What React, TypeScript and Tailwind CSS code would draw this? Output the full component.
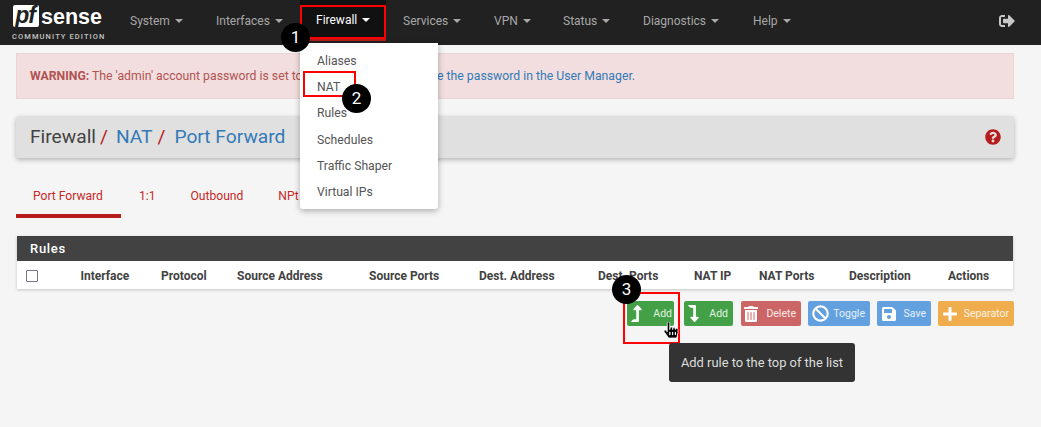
import React from "react";
import { FaLevelUpAlt, FaLevelDownAlt, FaTrashAlt, FaBan, FaSave, FaPlus, FaSignOutAlt, FaQuestionCircle, FaHandPointer } from "react-icons/fa";

const navItems = [
  { label: "System", cls: "w-[86px] pl-[15px]" },
  { label: "Interfaces", cls: "w-[99px] pl-[15px]" },
  { label: "Firewall", cls: "w-[86px] pl-[16px]", active: true },
  { label: "Services", cls: "w-[91px] pl-[17px]" },
  { label: "VPN", cls: "w-[69px] pl-[17px]" },
  { label: "Status", cls: "w-[80px] pl-[17px]" },
  { label: "Diagnostics", cls: "w-[110px] pl-[17px]" },
  { label: "Help", cls: "w-[60px] pl-[17px]" },
];

const Caret = () => <span className="ml-[5px] inline-block h-0 w-0 border-x-[4px] border-t-[4px] border-x-transparent border-t-current" />;

const Badge = ({ n, className }: { n: number; className: string }) => (
  <div className={"absolute z-30 flex h-[29px] w-[29px] items-center justify-center rounded-full bg-black text-[17px] text-white " + className}>{n}</div>
);

const columns = ["Interface", "Protocol", "Source Address", "Source Ports", "Dest. Address", "Dest. Ports", "NAT IP", "NAT Ports", "Description", "Actions"];

const buttons = [
  { label: "Add", Icon: FaLevelUpAlt, cls: "w-[47px] bg-[#43a047] mr-[10px] pl-[1px] pr-[2px]", icon: "text-[17px]" },
  { label: "Add", Icon: FaLevelDownAlt, cls: "w-[49px] bg-[#43a047] mr-[8px] pl-[1px] pr-[5px]", icon: "text-[17px]" },
  { label: "Delete", Icon: FaTrashAlt, cls: "w-[60px] bg-[#cc6666] mr-[7px] pl-[2px] pr-[5px]", icon: "text-[16px]" },
  { label: "Toggle", Icon: FaBan, cls: "w-[62px] bg-[#62a0e0] mr-[7px] pl-[4px] pr-[5px]", icon: "text-[17px]" },
  { label: "Save", Icon: FaSave, cls: "w-[54px] bg-[#62a0e0] mr-[7px] pl-[4px] pr-[5px]", icon: "text-[16px]" },
  { label: "Separator", Icon: FaPlus, cls: "w-[76px] bg-[#f0ad4e] pl-[4px] pr-[5px]", icon: "text-[16px]" },
];

export default function App() {
  return (
    <div className="relative h-[427px] w-[1041px] overflow-hidden bg-[#f5f5f5] font-['Roboto',sans-serif] text-[12px]">
      <nav className="flex h-[45px] items-center bg-[#212121]">
        <div className="ml-[13px] flex h-full w-[92px] flex-col pt-[4px]">
          <div className="flex h-[23px] items-center">
            <span className="flex h-[22px] w-[26px] items-center justify-center rounded-[2px] bg-white pr-[2px] font-['Liberation_Sans',sans-serif] text-[23px] font-bold italic leading-none tracking-[-1px] text-[#212121]">pf</span>
            <span className="ml-[2px] mt-[4px] font-['Liberation_Sans',sans-serif] text-[21.5px] font-bold leading-none text-white">sense</span>
          </div>
          <span className="ml-[-1px] mt-[5px] whitespace-nowrap text-[7.5px] font-medium leading-[9px] tracking-[1.1px] text-[#c4c4c4]">COMMUNITY EDITION</span>
        </div>
        <div className="ml-[10px] flex h-full">
          {navItems.map((n) => (
            <div key={n.label} className={"flex items-center " + n.cls + (n.active ? " h-[41px] border-b-[3px] border-[#b71c1c] bg-[#111111] pt-[1px] text-white" : " h-full pb-[4px] text-[#a8a8a8]")}>
              {n.label}
              <Caret />
            </div>
          ))}
        </div>
        <FaSignOutAlt className="ml-auto mr-[26px] mb-[4px] text-[16px] text-[#c8c8c8]" />
      </nav>

      <div className="ml-[16px] mr-[27px] mt-[8px] flex h-[46px] items-center border border-[#ebd5d7] bg-[#f2dede] px-[13px] text-[12.25px] text-[#b15353]">
        <span><b className="font-bold">WARNING:</b> The 'admin' account password is set to the default value. <span className="text-[#337ab7]">Change the password in the User Manager.</span></span>
      </div>

      <div className="ml-[16px] mr-[27px] mt-[17px] flex h-[42px] items-center justify-between rounded-[3px] bg-[#e0e0e0] pl-[14px] pr-[13px] text-[19.2px] text-[#424242] shadow-[0_2px_5px_rgba(0,0,0,0.26)]">
        <div className="flex items-center pt-[1px]">
          <span>Firewall</span>
          <span className="ml-[4px] text-[#b71c1c]">/</span>
          <span className="ml-[8px] text-[#337ab7]">NAT</span>
          <span className="ml-[5px] text-[#b71c1c]">/</span>
          <span className="ml-[9px] text-[#337ab7]">Port Forward</span>
        </div>
        <FaQuestionCircle className="text-[16px] text-[#b71c1c]" />
      </div>

      <div className="ml-[16px] mt-[20px] flex h-[40px] text-[12.1px] text-[#c62828]">
        <div className="flex h-full w-[105px] items-center border-b-[4px] border-[#b71c1c] pl-[17px]">Port Forward</div>
        <div className="ml-[18px] flex items-center pb-[4px]">1:1</div>
        <div className="ml-[35px] flex items-center pb-[4px]">Outbound</div>
        <div className="ml-[35px] flex items-center pb-[4px]">NPt</div>
      </div>

      <div className="ml-[17px] mr-[28px] mt-[18px] bg-white shadow-[0_1px_3px_rgba(0,0,0,0.2)]">
        <div className="flex h-[25px] items-center bg-[#424242] pl-[13px] text-[13px] font-medium tracking-[0.7px] text-white">Rules</div>
        <div className="grid h-[28px] grid-cols-[54.5px_80.5px_76px_132px_110px_119px_96px_65px_90px_99px_1fr] items-center pl-[9px] pt-[1px] font-bold text-[#424242]">
          <span className="h-[12px] w-[12px] rounded-[1px] border border-[#767686] bg-white" />
          {columns.map((c) => <span key={c} className="whitespace-nowrap">{c}</span>)}
        </div>
      </div>

      <div className="ml-[627px] mt-[12px] flex h-[25px]">
        {buttons.map((b, i) => (
          <div key={i} className={"flex items-center justify-between rounded-[2px] text-[10.5px] text-white/85 " + b.cls}>
            <b.Icon className={"text-white " + b.icon} />
            <span>{b.label}</span>
          </div>
        ))}
      </div>

      {/* overlays */}
      <div className="absolute left-[300px] top-[43px] z-10 flex h-[166px] w-[138px] flex-col rounded-b-[3px] bg-white pl-[17px] pt-[5px] text-[12.2px] text-[#555555] shadow-[0_2px_6px_rgba(0,0,0,0.3)]">
        {["Aliases", "NAT", "Rules", "Schedules", "Traffic Shaper", "Virtual IPs"].map((m) => (
          <div key={m} className="flex h-[26.2px] items-center">{m}</div>
        ))}
      </div>

      <div className="absolute left-[300px] top-[5px] z-20 h-[34px] w-[86px] border-2 border-[#ff0000]" />
      <div className="absolute left-[303px] top-[71px] z-20 h-[26px] w-[53px] border-2 border-[#ff0000]" />
      <div className="absolute left-[623px] top-[292px] z-20 h-[52px] w-[57px] border-2 border-[#ff0000]" />

      <Badge n={1} className="left-[281px] top-[23px]" />
      <Badge n={2} className="left-[342px] top-[84px]" />
      <Badge n={3} className="left-[612px] top-[275px]" />

      <FaHandPointer stroke="white" strokeWidth={24} className="absolute left-[663px] top-[322px] z-30 text-[16px] text-black" />

      <div className="absolute left-[669px] top-[343px] z-20 flex h-[39px] w-[186px] items-center justify-center rounded-[3px] bg-[#333333] text-[12.9px] text-[#dddddd]">
        Add rule to the top of the list
      </div>
    </div>
  );
}
